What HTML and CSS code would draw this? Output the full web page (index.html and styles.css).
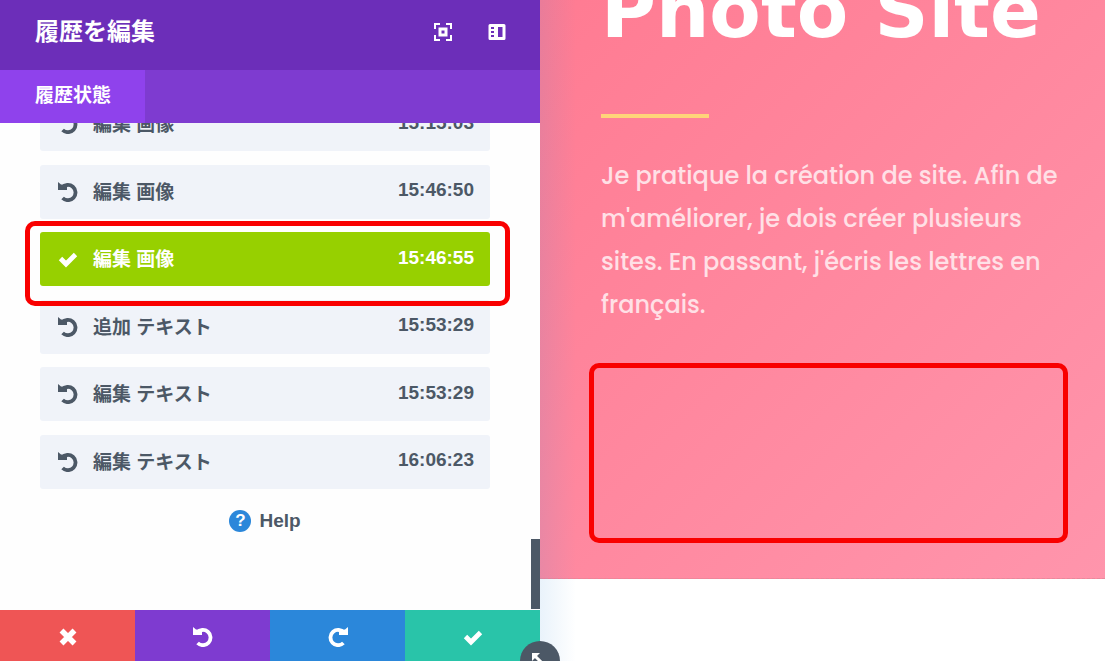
FILE: index.html
```
<!DOCTYPE html>
<html lang="ja">
<head>
  <meta charset="utf-8">
  <title>履歴を編集</title>
  <link rel="stylesheet" href="styles.css">
</head>
<body>
  <svg class="sprite" aria-hidden="true">
    <symbol id="undo" viewBox="0 0 20 20">
      <path d="M4 5.800A7.600 7.600 0 1 1 4.600 16" fill="none" stroke="currentColor" stroke-width="3.800"/>
      <path d="M0 0l3 2.500L9 3v5H0z" fill="currentColor"/>
    </symbol>
    <symbol id="check" viewBox="0 0 20 20">
      <path d="M2.500 9.500l5.500 5.500L17.500 5.500" fill="none" stroke="currentColor" stroke-width="4.800"/>
    </symbol>
    <symbol id="cross" viewBox="0 0 20 20">
      <path d="M3.500 3.500l13 13M16.500 3.500l-13 13" fill="none" stroke="currentColor" stroke-width="5.500"/>
    </symbol>
  </svg>

  <aside class="panel">
    <header class="panel-header">
      <h2>履歴を編集</h2>
      <button class="header-btn" aria-label="Expand">
        <svg viewBox="0 0 18 18" width="18" height="18">
          <path d="M1 6V1h5M12 1h5v5M17 12v5h-5M6 17H1v-5" fill="none" stroke="#fff" stroke-width="2"/>
          <rect x="6" y="6" width="6" height="6" fill="none" stroke="#fff" stroke-width="3"/>
        </svg>
      </button>
      <button class="header-btn" aria-label="Dock">
        <svg viewBox="0 0 18 18" width="18" height="18">
          <path fill="#fff" fill-rule="evenodd" d="M2 1h14a1.500 1.500 0 0 1 1.500 1.500v13A1.500 1.500 0 0 1 16 17H2a1.500 1.500 0 0 1-1.500-1.500v-13A1.500 1.500 0 0 1 2 1zM10 4v10h4.500V4zM3 4v2h3V4zM3 8v2h3V8zM3 12v2h3v-2z"/>
        </svg>
      </button>
    </header>
    <nav class="tabs">
      <button class="tab">履歴状態</button>
    </nav>
    <div class="panel-body">
      <ul class="history">
        <li><button class="state"><svg class="icon"><use href="#undo"/></svg><span>編集 画像</span><time>15:15:03</time></button></li>
        <li><button class="state"><svg class="icon"><use href="#undo"/></svg><span>編集 画像</span><time>15:46:50</time></button></li>
        <li class="marked"><button class="state active"><svg class="icon"><use href="#check"/></svg><span>編集 画像</span><time>15:46:55</time></button></li>
        <li><button class="state"><svg class="icon"><use href="#undo"/></svg><span>追加 テキスト</span><time>15:53:29</time></button></li>
        <li><button class="state"><svg class="icon"><use href="#undo"/></svg><span>編集 テキスト</span><time>15:53:29</time></button></li>
        <li><button class="state"><svg class="icon"><use href="#undo"/></svg><span>編集 テキスト</span><time>16:06:23</time></button></li>
      </ul>
      <a class="help" href="#help"><span class="help-icon">?</span>Help</a>
      <div class="scrollbar"></div>
    </div>
    <footer class="actions">
      <button class="action discard" aria-label="Discard"><svg class="icon"><use href="#cross"/></svg></button>
      <button class="action undo" aria-label="Undo"><svg class="icon"><use href="#undo"/></svg></button>
      <button class="action redo" aria-label="Redo"><svg class="icon flip"><use href="#undo"/></svg></button>
      <button class="action save" aria-label="Save"><svg class="icon"><use href="#check"/></svg></button>
    </footer>
    <button class="resize" aria-label="Resize">
      <svg viewBox="0 0 20 20" width="20" height="20">
        <path d="M4 4l12 12" stroke="#fff" stroke-width="3"/>
        <path d="M2 2h8l-8 8zM18 18h-8l8-8z" fill="#fff"/>
      </svg>
    </button>
  </aside>

  <main class="preview">
    <section class="hero">
      <h1>Photo Site</h1>
      <hr class="divider">
      <p>Je pratique la création de site. Afin de<br>m'améliorer, je dois créer plusieurs<br>sites. En passant, j'écris les lettres en<br>français.</p>
      <div class="empty-module"></div>
    </section>
    <section class="next"></section>
  </main>
</body>
</html>
```
FILE: styles.css
```
* {
  box-sizing: border-box;
}

body {
  display: flex;
  height: 100vh;
  margin: 0;
  overflow: hidden;
  background: #fff;
  font-family: "Liberation Sans", "Noto Sans CJK JP", sans-serif;
}

button {
  border: none;
  padding: 0;
  font: inherit;
  color: inherit;
  cursor: pointer;
}

.sprite {
  position: absolute;
  width: 0;
  height: 0;
}

.icon {
  width: 20px;
  height: 20px;
}

.flip {
  transform: scaleX(-1);
}

/* settings panel */
.panel {
  position: relative;
  z-index: 1;
  display: flex;
  flex-direction: column;
  flex: 0 0 540px;
  background: #fefefe;
}

.panel-header {
  display: flex;
  align-items: center;
  gap: 36px;
  height: 70px;
  padding: 0 34px 6px 35px;
  background: #6c2eb9;
  color: #fff;
}

.panel-header h2 {
  flex: 1;
  margin: 0;
  padding-bottom: 6px;
  font-size: 24px;
  font-weight: bold;
}

.header-btn {
  display: flex;
  background: none;
}

.tabs {
  display: flex;
  height: 53px;
  background: #7e3bd0;
}

.tab {
  padding: 0 34px 6px 35px;
  background: #8f42ec;
  color: #fff;
  font-size: 19px;
  font-weight: bold;
}

.panel-body {
  position: relative;
  display: flex;
  flex: 1;
  flex-direction: column;
  justify-content: flex-end;
  min-height: 0;
  padding: 0 50px 78px 40px;
  overflow: hidden;
}

.history {
  margin: 0;
  padding: 0;
  list-style: none;
}

.history li {
  position: relative;
  margin-bottom: 3%;
}

.state {
  display: flex;
  align-items: center;
  gap: 15px;
  width: 100%;
  height: 54px;
  padding: 0 16px 0 18px;
  border-radius: 3px;
  background: #f0f3f9;
  color: #4c5866;
  font-size: 19px;
  font-weight: bold;
  text-align: left;
}

.state span,
.state time {
  padding-bottom: 3px;
}

.state span {
  flex: 1;
}

.state.active {
  background: #97d000;
  color: #fff;
}

.marked::after {
  content: "";
  position: absolute;
  z-index: 1;
  inset: -11px -20px -20px -15px;
  border: 5px solid #f90000;
  border-radius: 10px;
  pointer-events: none;
}

.help {
  display: flex;
  align-items: center;
  align-self: center;
  gap: 8px;
  margin-top: 8px;
  color: #4c5866;
  font-size: 19px;
  font-weight: bold;
  text-decoration: none;
}

.help-icon {
  width: 22px;
  height: 22px;
  border-radius: 50%;
  background: #2b87da;
  color: #fff;
  font-size: 17px;
  line-height: 22px;
  text-align: center;
}

.scrollbar {
  position: absolute;
  right: 0;
  bottom: 1px;
  width: 9px;
  height: 70px;
  background: #4c5866;
}

.actions {
  display: grid;
  grid-template-columns: repeat(4, 1fr);
  height: 51px;
}

.action {
  display: flex;
  align-items: center;
  justify-content: center;
  padding-top: 2px;
  color: #fff;
}

.discard {
  background: #ef5555;
}

.undo {
  background: #7e3bd0;
}

.redo {
  background: #2b87da;
}

.save {
  background: #29c4a9;
}

.resize {
  position: absolute;
  right: -20px;
  bottom: -20px;
  display: flex;
  align-items: center;
  justify-content: center;
  width: 40px;
  height: 40px;
  border-radius: 50%;
  background: #4c5866;
}

/* page preview */
.preview {
  position: relative;
  display: flex;
  flex: 1;
  flex-direction: column;
  min-width: 0;
}

.preview::before {
  content: "";
  position: absolute;
  inset: 0 auto 0 0;
  width: 36px;
  background: linear-gradient(90deg, rgba(43, 135, 218, 0.1), rgba(43, 135, 218, 0));
}

.hero {
  display: flex;
  flex: 1;
  flex-direction: column;
  justify-content: flex-end;
  min-height: 0;
  padding: 0 37px 35px 61px;
  overflow: hidden;
  border-bottom: 1px dashed #e58c9d;
  background: linear-gradient(135deg, #ff7b92, #ff95ac);
}

.hero h1 {
  margin: 0;
  color: #fff;
  font-family: "DejaVu Sans", sans-serif;
  font-size: 75px;
  line-height: 76px;
  white-space: nowrap;
}

.divider {
  flex-shrink: 0;
  width: 108px;
  height: 4px;
  margin: 65px 0 36px;
  border: none;
  background: #ffd479;
}

.hero p {
  margin: 0;
  color: #ffe0e6;
  font-family: Poppins, Inter, sans-serif;
  font-size: 24px;
  font-weight: 500;
  line-height: 43px;
  white-space: nowrap;
}

.empty-module {
  flex-shrink: 0;
  height: 180px;
  margin: 37px 0 0 -12px;
  border: 5px solid #f90000;
  border-radius: 10px;
}

.next {
  height: 82px;
}
```
